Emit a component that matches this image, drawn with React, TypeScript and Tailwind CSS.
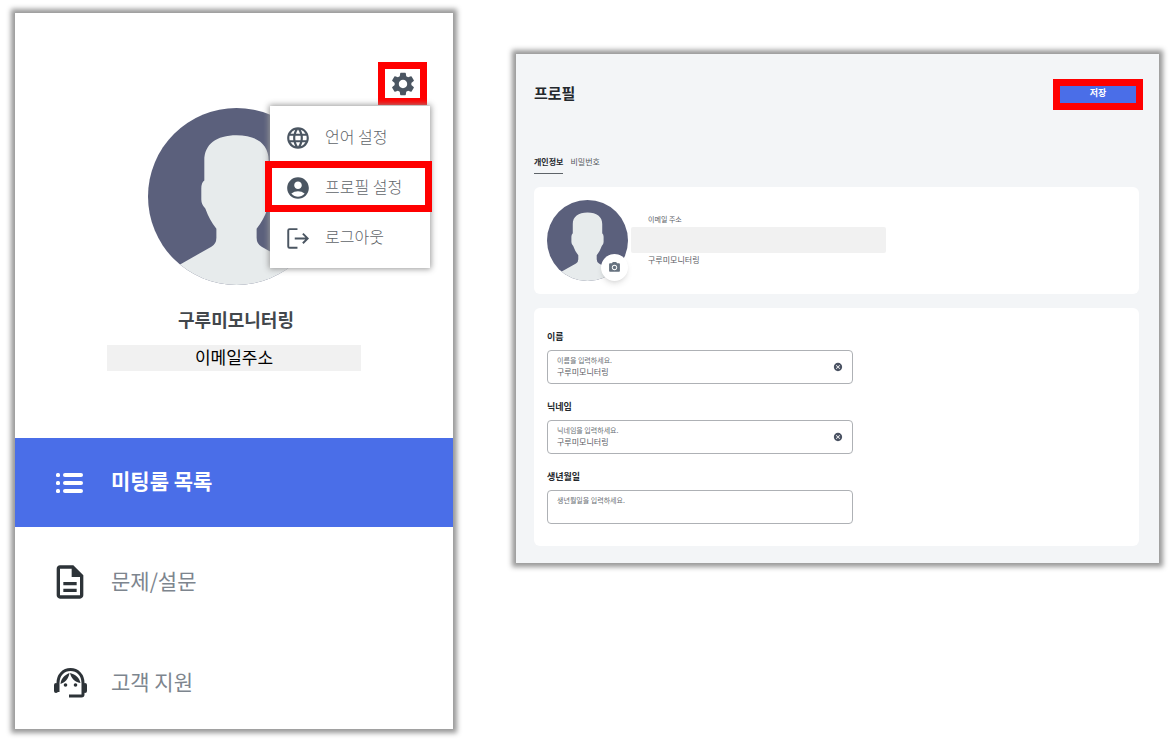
import { FC, ReactNode } from 'react'
import {
  MdAccountCircle,
  MdCancel,
  MdLanguage,
  MdOutlineDescription,
  MdPhotoCamera,
  MdSettings,
} from 'react-icons/md'

const Avatar: FC<{ className: string }> = ({ className }) => (
  <svg viewBox="0 0 176 176" className={className} aria-hidden="true">
    <clipPath id="avatar-clip">
      <circle cx="88" cy="88" r="88" />
    </clipPath>
    <g clipPath="url(#avatar-clip)">
      <rect width="176" height="176" fill="#5b607c" />
      <path
        fill="#e7ebec"
        d="M56 52C56 36 68 27 88 27s32 9 32 25v20q3 2 3 8v11q0 5-4 9c-3 8-6 14-11 20v9q0 6 5 9l32 18v40H31v-40l32-18q5-3 5-9v-9c-5-6-8-12-11-20q-4-4-4-9V80q0-6 3-8z"
      />
    </g>
  </svg>
)

const ListIcon = () => (
  <svg viewBox="0 0 28 22" className="w-[28px] h-[22px]" fill="currentColor">
    <rect x="0" y="1" width="4" height="4" rx="1.5" />
    <rect x="0" y="9" width="4" height="4" rx="1.5" />
    <rect x="0" y="17" width="4" height="4" rx="1.5" />
    <rect x="7" y="1" width="20" height="4" rx="2" />
    <rect x="7" y="9" width="20" height="4" rx="2" />
    <rect x="7" y="17" width="20" height="4" rx="2" />
  </svg>
)

const SupportIcon = () => (
  <svg viewBox="0 0 33 30" className="w-[33px] h-[30px]" fill="currentColor">
    <path
      d="M4 24V15C4 7 9.500 1.500 16.500 1.500S29 7 29 15v11.500q0 1.500-1.500 1.500H15"
      fill="none"
      stroke="currentColor"
      strokeWidth="3"
    />
    <rect x="0" y="15" width="4" height="10" rx="2" />
    <rect x="29" y="15" width="4" height="10" rx="2" />
    <path d="M15.500 5C11 7 7 10 6.500 16 11 14.500 14.500 11 15.500 5zM16 5c1 5 4.500 9 10.500 10C25.500 10 22 6.500 16 5z" />
    <circle cx="11.500" cy="17" r="1.800" />
    <circle cx="21.500" cy="17" r="1.800" />
  </svg>
)

const LogoutIcon = () => (
  <svg
    viewBox="0 0 24 24"
    className="size-[26px]"
    fill="none"
    stroke="currentColor"
    strokeWidth="1.8"
  >
    <path d="M11.500 3.800H4.200Q3 3.800 3 5v14.800Q3 21 4.200 21h7.300" />
    <path d="M9 12.400h11.500M16.500 8l4.400 4.400-4.400 4.400" />
  </svg>
)

const MenuItem: FC<{ icon: ReactNode; text: string }> = ({ icon, text }) => (
  <button
    type="button"
    className="flex items-center gap-[14px] w-full h-[50px] pl-[15px] text-[#5f656a]"
  >
    <span className="pt-px text-[#4b5662]">{icon}</span>
    <span className="pb-[2px] text-base font-light">{text}</span>
  </button>
)

const NavItem: FC<{ icon: ReactNode; text: string; active?: boolean }> = ({
  icon,
  text,
  active,
}) => (
  <a
    href="#"
    className={
      active
        ? 'flex items-center h-[89px] pl-[36px] bg-[#4a6ee8] text-white font-bold'
        : 'flex items-center h-[92px] pl-[36px] text-[#7d858e]'
    }
  >
    <span
      className={
        active
          ? 'flex justify-center w-[38px]'
          : 'flex justify-center w-[38px] text-[#2d3338]'
      }
    >
      {icon}
    </span>
    <span className="pl-[22px] pb-[3px] text-[21px]">{text}</span>
  </a>
)

const Field: FC<{
  id: string
  label: string
  hint: string
  value?: string
}> = ({ id, label, hint, value }) => (
  <div className="w-[306px] max-w-full">
    <label htmlFor={id} className="block text-[9px] leading-4 font-bold">
      {label}
    </label>
    <div className="flex items-center h-[34px] mt-[5px] px-[9px] rounded border border-[#aeb1b5]">
      <div className="flex-1 h-full pt-[3px]">
        <p className="text-[7px] leading-3 text-[#6b7075]">{hint}</p>
        <input
          id={id}
          type="text"
          defaultValue={value}
          className="block w-full h-3 text-[8px] leading-3 text-[#5b6065] outline-none"
        />
      </div>
      {value && (
        <button type="button" aria-label={`${label} 지우기`}>
          <MdCancel className="size-[10px] text-[#4b5363]" />
        </button>
      )}
    </div>
  </div>
)

const Sidebar = () => (
  <aside className="relative min-w-0 bg-white shadow-[0_0_5px_4px_#999999]">
    <div className="flex justify-end pt-[49px] pr-[26px]">
      <button
        type="button"
        aria-label="설정"
        className="flex items-center justify-center w-[49px] h-[43px] border-[7px] border-[#ff0000]"
      >
        <MdSettings className="size-[28px] shrink-0 text-[#4b5662]" />
      </button>
    </div>

    <div className="absolute top-[93px] right-[23px] w-[160px] py-[6px] bg-white shadow-[0_0_6px_1px_#999999]">
      <MenuItem icon={<MdLanguage className="size-[26px]" />} text="언어 설정" />
      <div className="relative">
        <MenuItem
          icon={<MdAccountCircle className="size-[26px]" />}
          text="프로필 설정"
        />
        <div className="absolute -top-px bottom-0 -left-[5px] -right-[2px] border-[7px] border-[#ff0000] pointer-events-none" />
      </div>
      <MenuItem icon={<LogoutIcon />} text="로그아웃" />
    </div>

    <div className="flex flex-col items-center pt-[3px] pb-[67px]">
      <div className="flex flex-col items-center pl-[4px]">
        <Avatar className="size-[177px]" />
        <h2 className="mt-[21px] text-lg leading-[26px] font-bold text-[#42474c]">
          구루미모니터링
        </h2>
      </div>
      <p className="w-[254px] h-[26px] mt-[13px] bg-[#f1f1f1] text-center text-[17px] leading-6 text-black">
        이메일주소
      </p>
    </div>

    <nav>
      <NavItem icon={<ListIcon />} text="미팅룸 목록" active />
      <div className="flex flex-col gap-[9px] pt-[9px]">
        <NavItem
          icon={<MdOutlineDescription className="size-[40px] shrink-0" />}
          text="문제/설문"
        />
        <NavItem icon={<SupportIcon />} text="고객 지원" />
      </div>
    </nav>
  </aside>
)

const Profile = () => (
  <main className="min-w-0 mt-[41px] pl-[18px] pr-[20px] pt-[25px] pb-[17px] bg-[#f3f5f7] text-[#24282d] shadow-[0_0_5px_4px_#999999]">
    <header className="flex items-start justify-between -mr-[4px]">
      <h1 className="text-[15px] leading-7 font-bold">프로필</h1>
      <button
        type="button"
        className="w-[90px] h-[31px] pb-[3px] border-[7px] border-[#ff0000] bg-[#4a6ee8] text-[9px] leading-[14px] font-bold text-white"
      >
        저장
      </button>
    </header>

    <nav className="flex gap-[7px] mt-[44px] text-[8px] leading-4">
      <a href="#" className="pb-[3px] border-b border-[#5d6368] font-bold">
        개인정보
      </a>
      <a href="#" className="text-[#55595e]">
        비밀번호
      </a>
    </nav>

    <section className="flex h-[107px] mt-[13px] pl-[13px] pt-[13px] rounded-md bg-white">
      <div className="relative size-[81px] shrink-0">
        <Avatar className="size-[81px]" />
        <button
          type="button"
          aria-label="사진 변경"
          className="absolute right-0 bottom-0 flex items-center justify-center size-[27px] rounded-full bg-white shadow-md"
        >
          <MdPhotoCamera className="size-[13px] text-[#66727f]" />
        </button>
      </div>
      <div className="w-[255px] ml-[3px] pt-[11px] text-[8px] leading-4 text-[#5b6065]">
        <p className="pl-[17px] text-[7px]">이메일 주소</p>
        <div className="h-[26px] rounded-xs bg-[#f1f1f1]" />
        <p className="pl-[17px] leading-[14px]">구루미모니터링</p>
      </div>
    </section>

    <section className="flex flex-col gap-[15px] mt-[14px] px-[13px] pt-[21px] pb-[22px] rounded-md bg-white">
      <Field
        id="name"
        label="이름"
        hint="이름을 입력하세요."
        value="구루미모니터링"
      />
      <Field
        id="nickname"
        label="닉네임"
        hint="닉네임을 입력하세요."
        value="구루미모니터링"
      />
      <Field id="birthday" label="생년월일" hint="생년월일을 입력하세요." />
    </section>
  </main>
)

export default function App() {
  return (
    <div className="grid grid-cols-[438fr_643fr] items-start gap-[63px] min-h-screen px-[15px] py-[13px] bg-white font-['Noto_Sans_CJK_KR',sans-serif]">
      <Sidebar />
      <Profile />
    </div>
  )
}
